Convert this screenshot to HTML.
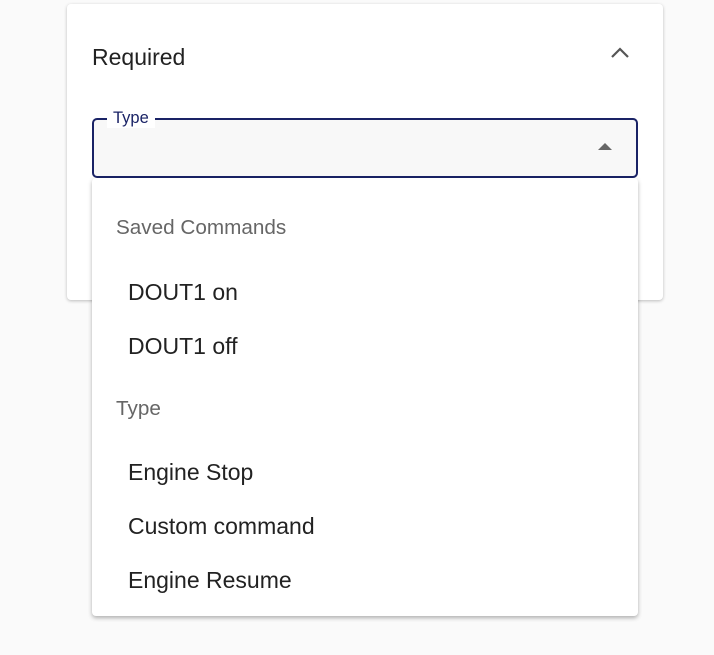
<!DOCTYPE html>
<html><head><style>
body{margin:0;width:714px;height:655px;background:#fafafa;font-family:"Liberation Sans",sans-serif;position:relative;overflow:hidden}
.card{position:absolute;left:67px;top:4px;width:596px;height:296px;background:#fff;border-radius:4px;box-shadow:0 1px 3px rgba(0,0,0,.25)}
.req{position:absolute;left:92px;top:44px;font-size:23px;color:#222}
.chev{position:absolute;left:610px;top:46px}
.inp{position:absolute;left:92px;top:118px;width:542px;height:56px;border:2px solid #1a2366;border-radius:5px;background:#f8f8f8}
.lab{position:absolute;left:107px;top:109px;background:#fff;padding:0 6px;font-size:16.5px;color:#1a2366;line-height:19px}
.tri{position:absolute;left:598px;top:143px;width:0;height:0;border-left:7px solid transparent;border-right:7px solid transparent;border-bottom:7px solid #666}
.menu{position:absolute;left:92px;top:178px;width:546px;height:438px;background:#fff;border-radius:4px;box-shadow:0 2px 4px rgba(0,0,0,.3)}
.t{position:absolute;white-space:nowrap}
.sh{font-size:20.7px;color:#666;left:24px}
.it{font-size:23px;color:#222;left:36px}
</style></head><body>
<div class="card"></div>
<div class="req">Required</div>
<svg class="chev" width="20" height="14" viewBox="0 0 20 14"><path d="M2 11 L10 3 L18 11" fill="none" stroke="#555" stroke-width="2.2"/></svg>
<div class="inp"></div>
<div class="lab">Type</div>
<div class="tri"></div>
<div class="menu">
<div class="t sh" style="top:38px">Saved Commands</div>
<div class="t it" style="top:101px">DOUT1 on</div>
<div class="t it" style="top:155px">DOUT1 off</div>
<div class="t sh" style="top:219px">Type</div>
<div class="t it" style="top:281px">Engine Stop</div>
<div class="t it" style="top:335px">Custom command</div>
<div class="t it" style="top:389px">Engine Resume</div>
</div>
</body></html>
